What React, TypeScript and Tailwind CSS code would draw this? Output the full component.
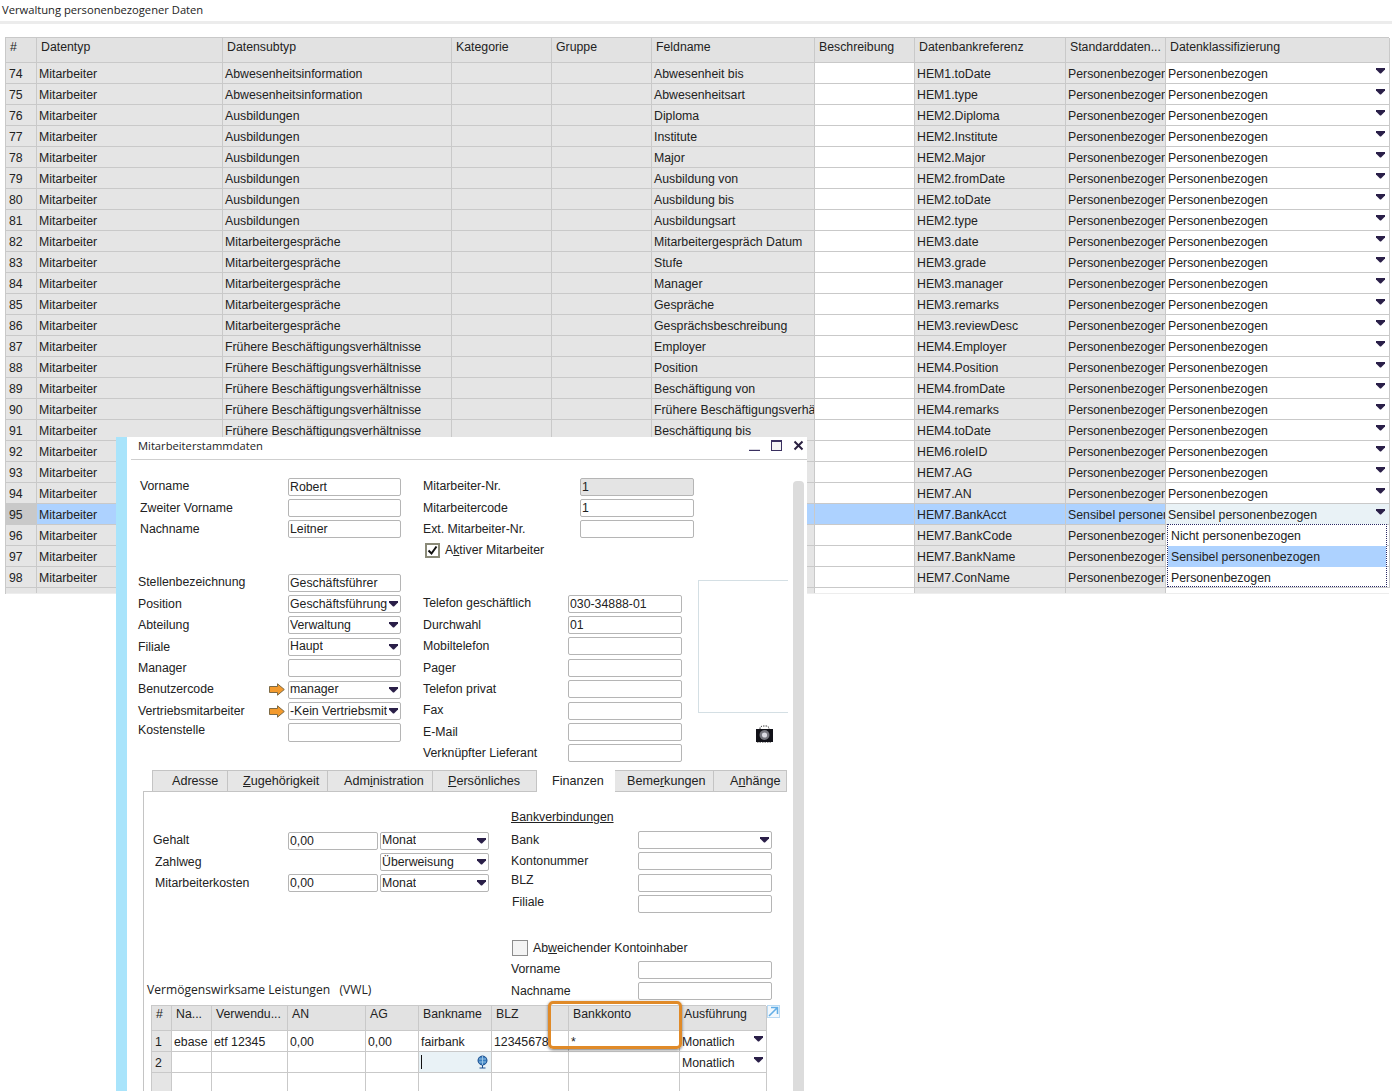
import React from "react";

const C = "Personenbezogen";
const rows: [number, string, string, string][] = [
  [74, "Abwesenheitsinformation", "Abwesenheit bis", "HEM1.toDate"],
  [75, "Abwesenheitsinformation", "Abwesenheitsart", "HEM1.type"],
  [76, "Ausbildungen", "Diploma", "HEM2.Diploma"],
  [77, "Ausbildungen", "Institute", "HEM2.Institute"],
  [78, "Ausbildungen", "Major", "HEM2.Major"],
  [79, "Ausbildungen", "Ausbildung von", "HEM2.fromDate"],
  [80, "Ausbildungen", "Ausbildung bis", "HEM2.toDate"],
  [81, "Ausbildungen", "Ausbildungsart", "HEM2.type"],
  [82, "Mitarbeitergespräche", "Mitarbeitergespräch Datum", "HEM3.date"],
  [83, "Mitarbeitergespräche", "Stufe", "HEM3.grade"],
  [84, "Mitarbeitergespräche", "Manager", "HEM3.manager"],
  [85, "Mitarbeitergespräche", "Gespräche", "HEM3.remarks"],
  [86, "Mitarbeitergespräche", "Gesprächsbeschreibung", "HEM3.reviewDesc"],
  [87, "Frühere Beschäftigungsverhältnisse", "Employer", "HEM4.Employer"],
  [88, "Frühere Beschäftigungsverhältnisse", "Position", "HEM4.Position"],
  [89, "Frühere Beschäftigungsverhältnisse", "Beschäftigung von", "HEM4.fromDate"],
  [90, "Frühere Beschäftigungsverhältnisse", "Frühere Beschäftigungsverhältnisse", "HEM4.remarks"],
  [91, "Frühere Beschäftigungsverhältnisse", "Beschäftigung bis", "HEM4.toDate"],
  [92, "", "", "HEM6.roleID"],
  [93, "", "", "HEM7.AG"],
  [94, "", "", "HEM7.AN"],
  [95, "", "", "HEM7.BankAcct"],
  [96, "", "", "HEM7.BankCode"],
  [97, "", "", "HEM7.BankName"],
  [98, "", "", "HEM7.ConName"],
];

const cols = "grid grid-cols-[31px_186px_229px_100px_100px_163px_100px_151px_100px_224px]";
const cell = "overflow-hidden whitespace-nowrap border-r border-b border-[#c9c9c9] pl-[2px]";

function Arrow({ className = "" }: { className?: string }) {
  return (
    <svg width="9" height="6" viewBox="0 0 9 6" className={"shrink-0 " + className}>
      <path d="M0 0H9V1.5L5 5.5H4L0 1.5Z" fill="#2a1f48" />
    </svg>
  );
}

function Input({ w, value = "", grey = false, h = "h-[18px]" }: { w: string; value?: string; grey?: boolean; h?: string }) {
  return (
    <div className={`${w} ${h} shrink-0 overflow-hidden whitespace-nowrap rounded-[2px] border border-[#b5b5b5] pl-[1px] leading-[17px] ${grey ? "bg-[#e4e4e4]" : "bg-white"}`}>
      {value}
    </div>
  );
}

function Select({ w, value }: { w: string; value: string }) {
  return (
    <div className={`${w} flex h-[18px] shrink-0 items-center justify-between overflow-hidden whitespace-nowrap rounded-[2px] border border-[#b5b5b5] bg-white pl-[1px] pr-[2px] leading-[17px]`}>
      <span className="overflow-hidden">{value}</span>
      <Arrow />
    </div>
  );
}

function OrangeArrow() {
  return (
    <svg width="16" height="13" viewBox="0 0 16 13" className="shrink-0">
      <path d="M0.5 3.5H8.5V0.8L15.3 6.5L8.5 12.2V9.5H0.5Z" fill="#f39a2d" stroke="#7d6a45" strokeWidth="1" />
    </svg>
  );
}

function LeftRow({ label, children, arrow, up, first }: { label: string; children: React.ReactNode; arrow?: boolean; up?: boolean; first?: boolean }) {
  return (
    <div className={`flex h-[21.4px] items-center ${first ? "pl-[13px]" : "pl-[11px]"}`}>
      <div className={`flex ${first ? "w-[148px]" : "w-[150px]"} items-center justify-between pr-[3px] ${up ? "pb-[5px]" : ""}`}>
        <span>{label}</span>
        {arrow && <OrangeArrow />}
      </div>
      {children}
    </div>
  );
}

function RightRow({ label, w, children }: { label: React.ReactNode; w: string; children: React.ReactNode }) {
  return (
    <div className="flex h-[21.4px] items-center">
      <div className={w}>{label}</div>
      {children}
    </div>
  );
}

function Tab({ w, active, children }: { w: string; active?: boolean; children: React.ReactNode }) {
  return (
    <div
      className={`${w} relative z-10 flex items-center whitespace-nowrap border-[#c4c4c4] text-[12.6px] ${
        active ? "-mb-px h-[22px] bg-white" : "h-[21px] border-t border-r bg-[#e6e6e6] first:border-l"
      }`}
    >
      {children}
    </div>
  );
}

const vwlCols = "grid grid-cols-[20px_40px_76px_78px_53px_73px_77px_111px_87px]";
const vCell = "overflow-hidden whitespace-nowrap border-r border-b border-[#c9c9c9] pl-[2px]";

export default function App() {
  return (
    <div className="relative h-[1091px] w-[1392px] overflow-hidden bg-white font-['Liberation_Sans',Arial,sans-serif] text-[12.3px] text-[#222222]">
      <div className="h-[21px] pl-[2px] pt-[3px] font-['Open_Sans',sans-serif] text-[11.2px] leading-[14px]">
        Verwaltung personenbezogener Daten
      </div>
      <div className="h-[3px] bg-[#ececec]" />

      <div className="ml-[5px] mt-[13px] w-[1384px] border-t border-l border-[#c9c9c9]">
        <div className={`${cols} h-[25px] bg-[#e2e2e2] leading-[18px]`}>
          {["#", "Datentyp", "Datensubtyp", "Kategorie", "Gruppe", "Feldname", "Beschreibung", "Datenbankreferenz", "Standarddaten...", "Datenklassifizierung"].map((h) => (
            <div key={h} className="overflow-hidden whitespace-nowrap border-r border-b border-[#c9c9c9] pl-[4px]">{h}</div>
          ))}
        </div>
        {rows.map(([n, sub, feld, db]) => {
          const sel = n === 95;
          const bg = sel ? "bg-[#add2ff]" : "bg-[#e5e5e5]";
          const val = sel ? "Sensibel personenbezogen" : C;
          return (
            <div key={n} className={`${cols} h-[21px] leading-[23px]`}>
              <div className={`${cell} pl-[3px] ${sel ? "bg-[#c9c9c9]" : "bg-[#e5e5e5]"}`}>{n}</div>
              <div className={`${cell} ${bg}`}>Mitarbeiter</div>
              <div className={`${cell} ${bg}`}>{sub}</div>
              <div className={`${cell} ${bg}`} />
              <div className={`${cell} ${bg}`} />
              <div className={`${cell} ${bg}`}>{feld}</div>
              <div className={`${cell} ${sel ? "bg-[#add2ff]" : "bg-white"}`} />
              <div className={`${cell} ${bg}`}>{db}</div>
              <div className={`${cell} ${bg}`}>{sel ? "Sensibel personenbezogen" : C + "e"}</div>
              <div className={`${cell} flex items-start justify-between pr-[4px] ${sel ? "bg-[#e9f2f6]" : "bg-white"}`}>
                <span>{val}</span>
                <Arrow className="mt-[5px]" />
              </div>
            </div>
          );
        })}
        <div className={`${cols} h-[6px] border-b border-[#ededed]`}>
          <div className="border-r border-[#c9c9c9] bg-[#e5e5e5]" />
          <div className="border-r border-[#c9c9c9] bg-[#e5e5e5]" />
          <div className="border-r border-[#c9c9c9] bg-[#e5e5e5]" />
          <div className="border-r border-[#c9c9c9] bg-[#e5e5e5]" />
          <div className="border-r border-[#c9c9c9] bg-[#e5e5e5]" />
          <div className="border-r border-[#c9c9c9] bg-[#e5e5e5]" />
          <div className="border-r border-[#c9c9c9] bg-white" />
          <div className="border-r border-[#c9c9c9] bg-[#e5e5e5]" />
          <div className="border-r border-[#c9c9c9] bg-[#e5e5e5]" />
          <div className="bg-white" />
        </div>
      </div>

      {/* dropdown list */}
      <div className="absolute left-[1167px] top-[524px] w-[220px] border border-dotted border-[#2a2a66] bg-white leading-[22px]">
        <div className="h-[21px] pl-[3px]">Nicht personenbezogen</div>
        <div className="h-[21px] bg-[#add2ff] pl-[3px]">Sensibel personenbezogen</div>
        <div className="h-[19px] pl-[3px]">Personenbezogen</div>
      </div>

      {/* window */}
      <div className="absolute left-[116px] top-[437px] flex h-[654px] w-[691px]">
        <div className="w-[11px] shrink-0 bg-[#a9e4fb]" />
        <div className="flex min-w-0 flex-1 flex-col bg-white">
          <div className="ml-[4px] flex h-[23px] shrink-0 items-start justify-between border-b border-[#cfcfcf] pl-[7px]">
            <span className="pt-[2px] font-['Open_Sans',sans-serif] text-[11.2px] leading-[14px]">Mitarbeiterstammdaten</span>
            <div className="flex items-start gap-[11px] pr-[3px] pt-[3px]">
              <svg width="11" height="11" viewBox="0 0 11 11"><path d="M0 10.5H11" stroke="#3a3060" strokeWidth="1.4" /></svg>
              <svg width="11" height="11" viewBox="0 0 11 11"><rect x="0.5" y="0.5" width="10" height="10" fill="#f4f4f4" stroke="#3a3060" /><path d="M0 1.5H11" stroke="#3a3060" /></svg>
              <svg width="11" height="11" viewBox="0 0 11 11"><path d="M1.5 1.5L9.5 9.5M9.5 1.5L1.5 9.5" stroke="#2a2040" strokeWidth="2" /></svg>
            </div>
          </div>

          <div className="flex min-h-0 flex-1">
            <div className="w-[666px] shrink-0">
              {/* block 1 */}
              <div className="flex h-[112px] pt-[16px]">
                <div className="w-[296px] shrink-0">
                  <LeftRow first label="Vorname"><Input w="w-[113px]" value="Robert" /></LeftRow>
                  <LeftRow first label="Zweiter Vorname"><Input w="w-[113px]" /></LeftRow>
                  <LeftRow first label="Nachname"><Input w="w-[113px]" value="Leitner" /></LeftRow>
                </div>
                <div>
                  <RightRow label="Mitarbeiter-Nr." w="w-[157px]"><Input w="w-[114px]" grey value="1" /></RightRow>
                  <RightRow label="Mitarbeitercode" w="w-[157px]"><Input w="w-[114px]" value="1" /></RightRow>
                  <RightRow label="Ext. Mitarbeiter-Nr." w="w-[157px]"><Input w="w-[114px]" /></RightRow>
                  <div className="flex h-[21px] items-center pl-[2px]">
                    <div className="flex h-[15px] w-[15px] items-center justify-center border-2 border-[#8a8a78] bg-white">
                      <svg width="11" height="11" viewBox="0 0 11 11"><path d="M1.5 5.5L4.5 8.5L9.5 1.5" fill="none" stroke="#111111" strokeWidth="2" /></svg>
                    </div>
                    <span className="ml-[5px]">A<u>k</u>tiver Mitarbeiter</span>
                  </div>
                </div>
              </div>

              {/* block 2 */}
              <div className="flex h-[198px]">
                <div className="w-[296px] shrink-0">
                  <LeftRow label="Stellenbezeichnung"><Input w="w-[113px]" value="Geschäftsführer" /></LeftRow>
                  <LeftRow label="Position"><Select w="w-[113px]" value="Geschäftsführung" /></LeftRow>
                  <LeftRow label="Abteilung"><Select w="w-[113px]" value="Verwaltung" /></LeftRow>
                  <LeftRow label="Filiale"><Select w="w-[113px]" value="Haupt" /></LeftRow>
                  <LeftRow label="Manager"><Input w="w-[113px]" /></LeftRow>
                  <LeftRow label="Benutzercode" arrow><Select w="w-[113px]" value="manager" /></LeftRow>
                  <LeftRow label="Vertriebsmitarbeiter" arrow><Select w="w-[113px]" value="-Kein Vertriebsmit" /></LeftRow>
                  <LeftRow label="Kostenstelle" up><Input w="w-[113px]" h="h-[19px]" /></LeftRow>
                </div>
                <div className="w-[259px] shrink-0 pt-[21px]">
                  {[
                    ["Telefon geschäftlich", "030-34888-01"],
                    ["Durchwahl", "01"],
                    ["Mobiltelefon", ""],
                    ["Pager", ""],
                    ["Telefon privat", ""],
                    ["Fax", ""],
                    ["E-Mail", ""],
                    ["Verknüpfter Lieferant", ""],
                  ].map(([l, v]) => (
                    <RightRow key={l} label={l} w="w-[145px]"><Input w="w-[114px]" value={v} /></RightRow>
                  ))}
                </div>
                <div className="ml-[16px] w-[90px] pt-[8px]">
                  <div className="h-[133px] border-y border-l border-[#d4dfe4]" />
                  <svg width="19" height="19" viewBox="0 0 19 19" className="ml-[57px] mt-[12px]">
                    <path d="M5 4V2.5L7 1H12L14 2.5V4" fill="none" stroke="#444444" strokeDasharray="1.5 1" />
                    <rect x="1" y="4" width="17" height="13" fill="#111118" />
                    <circle cx="9.5" cy="10" r="5" fill="#77777f" />
                    <circle cx="9.5" cy="10" r="2.6" fill="#dcdce4" />
                    <path d="M2 17.5H17" stroke="#9a9a9a" strokeDasharray="1.5 1" />
                  </svg>
                </div>
              </div>

              {/* tabs */}
              <div className="ml-[25px] flex w-[635px] items-start">
                <Tab w="w-[76px] pl-[19px]">Adresse</Tab>
                <Tab w="w-[100px] pl-[15px]"><span><u>Z</u>ugehörigkeit</span></Tab>
                <Tab w="w-[105px] pl-[16px]"><span>Adm<u>i</u>nistration</span></Tab>
                <Tab w="w-[104px] pl-[15px]"><span><u>P</u>ersönliches</span></Tab>
                <Tab w="w-[78px] pl-[15px]" active>Finanzen</Tab>
                <Tab w="w-[99px] pl-[12px]"><span>Beme<u>r</u>kungen</span></Tab>
                <Tab w="w-[73px] pl-[16px]"><span>A<u>n</u>hänge</span></Tab>
              </div>

              {/* panel */}
              <div className="ml-[16px] h-[300px] w-[644px] border-t border-l border-[#c4c4c4]">
                <div className="flex h-[213px]">
                  <div className="flex w-[367px] shrink-0 flex-col pt-[38px]">
                    <div className="flex h-[21.4px] items-center pl-[9px]">
                      <span className="w-[135px]">Gehalt</span>
                      <Input w="w-[90px]" value="0,00" />
                      <div className="w-[2px]" />
                      <Select w="w-[109px]" value="Monat" />
                    </div>
                    <div className="flex h-[21.4px] items-center pl-[11px]">
                      <span className="w-[225px]">Zahlweg</span>
                      <Select w="w-[109px]" value="Überweisung" />
                    </div>
                    <div className="flex h-[21.4px] items-center pl-[11px]">
                      <span className="w-[133px]">Mitarbeiterkosten</span>
                      <Input w="w-[90px]" value="0,00" />
                      <div className="w-[2px]" />
                      <Select w="w-[109px]" value="Monat" />
                    </div>
                    <div className="mt-auto pb-[7px] pl-[3px] font-['Open_Sans',sans-serif] text-[12.1px] leading-[16px]">
                      Vermögenswirksame Leistungen&nbsp;&nbsp; (VWL)
                    </div>
                  </div>
                  <div className="pt-[16px]">
                    <div className="h-[21.4px] leading-[18px] underline">Bankverbindungen</div>
                    <RightRow label="Bank" w="w-[127px]"><Select w="w-[134px]" value="" /></RightRow>
                    <RightRow label="Kontonummer" w="w-[127px]"><Input w="w-[134px]" /></RightRow>
                    <RightRow label={<span className="relative -top-[3px]">BLZ</span>} w="w-[127px]"><Input w="w-[134px]" /></RightRow>
                    <RightRow label={<span className="relative -top-[2px] left-[1px]">Filiale</span>} w="w-[127px]"><Input w="w-[134px]" /></RightRow>
                    <div className="mt-[25px] flex h-[17px] items-center pl-[1px]">
                      <div className="h-[16px] w-[16px] border border-[#8d8d8d] bg-[#f4f4f4]" />
                      <span className="ml-[5px]">Ab<u>w</u>eichender Kontoinhaber</span>
                    </div>
                    <div className="mt-[2px]" />
                    <RightRow label="Vorname" w="w-[127px]"><Input w="w-[134px]" /></RightRow>
                    <RightRow label="Nachname" w="w-[127px]"><Input w="w-[134px]" /></RightRow>
                  </div>
                </div>

                <div className="relative ml-[7px] w-[615px] border-t border-l border-[#c9c9c9]">
                  <div className={`${vwlCols} h-[25px] bg-[#e2e2e2] leading-[17px]`}>
                    {["#", "Na...", "Verwendu...", "AN", "AG", "Bankname", "BLZ", "Bankkonto", "Ausführung"].map((h) => (
                      <div key={h} className="overflow-hidden whitespace-nowrap border-r border-b border-[#c9c9c9] pl-[4px]">{h}</div>
                    ))}
                  </div>
                  <div className={`${vwlCols} h-[21px] leading-[23px]`}>
                    <div className={`${vCell} bg-[#e5e5e5] pl-[3px]`}>1</div>
                    <div className={vCell}>ebase</div>
                    <div className={vCell}>etf 12345</div>
                    <div className={vCell}>0,00</div>
                    <div className={vCell}>0,00</div>
                    <div className={vCell}>fairbank</div>
                    <div className={vCell}>12345678</div>
                    <div className={vCell}>*</div>
                    <div className={`${vCell} flex items-start justify-between pr-[3px]`}>
                      <span>Monatlich</span><Arrow className="mt-[5px]" />
                    </div>
                  </div>
                  <div className={`${vwlCols} h-[21px] leading-[23px]`}>
                    <div className={`${vCell} bg-[#e5e5e5] pl-[3px]`}>2</div>
                    <div className={vCell} />
                    <div className={vCell} />
                    <div className={vCell} />
                    <div className={vCell} />
                    <div className={`${vCell} flex items-center justify-between bg-[#e9f2f6] pr-[3px]`}>
                      <div className="h-[14px] w-px bg-[#111111]" />
                      <svg width="11" height="14" viewBox="0 0 11 14">
                        <circle cx="5.5" cy="5.5" r="4.5" fill="#3a7fc0" stroke="#1c4f8f" />
                        <path d="M2 4H9M2 7H9M5.5 1V10" stroke="#a8d0ec" strokeWidth="0.8" />
                        <path d="M2.5 13H8.5M5.5 10V13" stroke="#1c4f8f" />
                      </svg>
                    </div>
                    <div className={vCell} />
                    <div className={vCell} />
                    <div className={`${vCell} flex items-start justify-between pr-[3px]`}>
                      <span>Monatlich</span><Arrow className="mt-[5px]" />
                    </div>
                  </div>
                  <div className={`${vwlCols} h-[21px]`}>
                    <div className={`${vCell} bg-[#e5e5e5]`} />
                    <div className={vCell} />
                    <div className={vCell} />
                    <div className={vCell} />
                    <div className={vCell} />
                    <div className={vCell} />
                    <div className={vCell} />
                    <div className={vCell} />
                    <div className={vCell} />
                  </div>

                  {/* highlight box */}
                  <div className="absolute left-[396px] top-[-5px] h-[48px] w-[134px] rounded-[5px] border-[3px] border-[#e08a28] shadow-[0_1px_3px_rgba(0,0,0,0.55)]" />
                  {/* expand icon */}
                  <div className="absolute left-[615px] top-[-1px] flex h-[13px] w-[13px] items-center justify-center border border-[#b9d9f2] bg-[#f2f8fd]">
                    <svg width="11" height="11" viewBox="0 0 11 11"><path d="M1 10L9 2M3 1.5H9.5V8" fill="none" stroke="#63aee6" strokeWidth="1.6" /></svg>
                  </div>
                </div>
              </div>
            </div>
            <div className="mt-[21px] w-[11px] shrink-0 rounded-t-[4px] bg-[#dcdcdc]" />
          </div>
        </div>
      </div>
    </div>
  );
}
